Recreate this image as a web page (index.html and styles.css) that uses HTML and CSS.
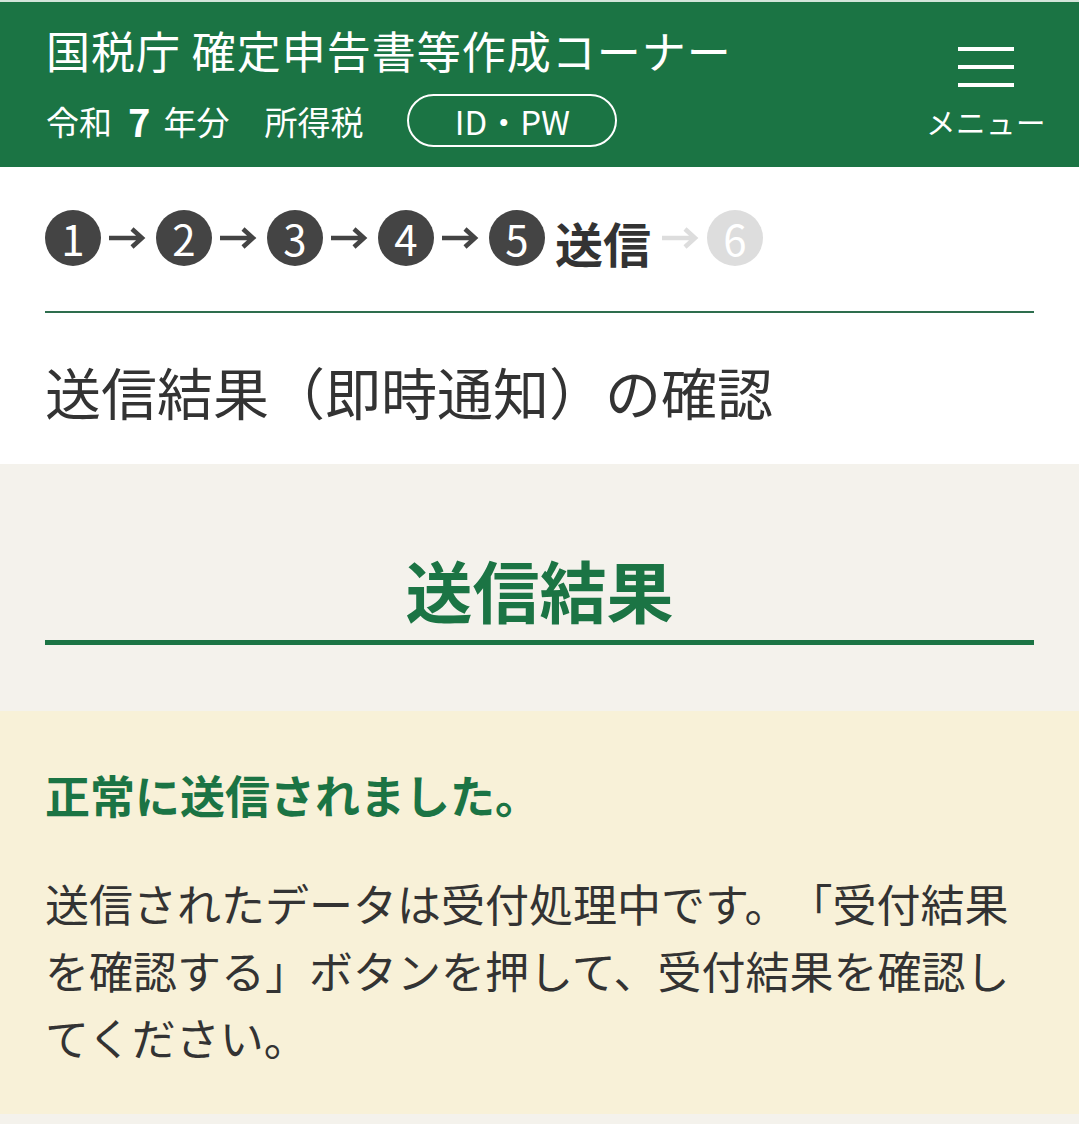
FILE: index.html
```html
<!DOCTYPE html>
<html lang="ja">
<head>
<meta charset="utf-8">
<title>送信結果（即時通知）の確認</title>
<link rel="stylesheet" href="styles.css">
</head>
<body>
<header class="header">
  <div class="header-main">
    <div class="site-title">国税庁 確定申告書等作成コーナー</div>
    <div class="header-sub">
      <span class="era">令和</span><b class="year-num">7</b><span class="era">年分</span>
      <span class="tax">所得税</span>
      <span class="pill">ID・PW</span>
    </div>
  </div>
  <div class="menu">
    <div class="burger"><span></span><span></span><span></span></div>
    <div class="menu-label">メニュー</div>
  </div>
</header>

<section class="top">
  <div class="steps">
    <span class="step">1</span>
    <svg class="arrow" viewBox="0 0 38 24"><path d="M1 12H34M24 3L34 12L24 21" fill="none" stroke="currentColor" stroke-width="4.5"/></svg>
    <span class="step">2</span>
    <svg class="arrow" viewBox="0 0 38 24"><path d="M1 12H34M24 3L34 12L24 21" fill="none" stroke="currentColor" stroke-width="4.5"/></svg>
    <span class="step">3</span>
    <svg class="arrow" viewBox="0 0 38 24"><path d="M1 12H34M24 3L34 12L24 21" fill="none" stroke="currentColor" stroke-width="4.5"/></svg>
    <span class="step">4</span>
    <svg class="arrow" viewBox="0 0 38 24"><path d="M1 12H34M24 3L34 12L24 21" fill="none" stroke="currentColor" stroke-width="4.5"/></svg>
    <span class="step">5</span>
    <span class="step-label">送信</span>
    <svg class="arrow arrow-off" viewBox="0 0 38 24"><path d="M1 12H34M24 3L34 12L24 21" fill="none" stroke="currentColor" stroke-width="4.5"/></svg>
    <span class="step step-off">6</span>
  </div>
  <h1 class="page-title">送信結果（即時通知）の確認</h1>
</section>

<section class="result-head">
  <h2 class="result-title">送信結果</h2>
</section>

<section class="notice">
  <p class="notice-title">正常に送信されました。</p>
  <p class="notice-text">送信されたデータは受付処理中です。「受付結果を確認する」ボタンを押して、受付結果を確認してください。</p>
</section>
<div class="tail"></div>
</body>
</html>
```

FILE: styles.css
```css
* {
  box-sizing: border-box;
}

html, body {
  margin: 0;
  padding: 0;
  background: #f4f2ec;
}

body {
  font-family: "Noto Sans CJK JP", "Noto Sans", sans-serif;
  color: #333333;
  text-spacing-trim: space-all;
}

.header {
  border-top: 2px solid #d3e5da;
  background: #1b7444;
  color: #ffffff;
  height: 167px;
  display: flex;
  justify-content: space-between;
  padding: 0 33px 0 46px;
}

.header-main {
  display: flex;
  flex-direction: column;
  padding-top: 22px;
}

.site-title {
  font-size: 44px;
  line-height: 53px;
  letter-spacing: 1px;
}

.header-sub {
  display: flex;
  align-items: center;
  margin-top: 17px;
  font-size: 33px;
  line-height: 40px;
}

.year-num {
  font-size: 38px;
  font-weight: 700;
  margin: 0 13px 0 16px;
}

.tax {
  margin-left: 35px;
}

.pill {
  margin-left: 44px;
  width: 210px;
  height: 53px;
  border: 2px solid #ffffff;
  border-radius: 27px;
  display: flex;
  align-items: center;
  justify-content: center;
  font-size: 33px;
}

.menu {
  display: flex;
  flex-direction: column;
  align-items: center;
  padding-top: 45px;
}

.burger {
  width: 56px;
  display: flex;
  flex-direction: column;
  gap: 14px;
}

.burger span {
  display: block;
  height: 4px;
  background: #ffffff;
}

.menu-label {
  margin-top: 16px;
  font-size: 29.5px;
  line-height: 36px;
  letter-spacing: 0.5px;
}

.top {
  background: #ffffff;
  padding: 43px 45px 41px;
}

.steps {
  display: flex;
  align-items: center;
  height: 56px;
  padding-bottom: 45px;
  box-sizing: content-box;
  border-bottom: 2px solid #2e6e4e;
}

.step {
  width: 56px;
  height: 56px;
  border-radius: 50%;
  background: #444444;
  color: #ffffff;
  font-size: 42px;
  line-height: 56px;
  text-align: center;
  flex: none;
}

.step-off {
  background: #dddddd;
}

.arrow {
  width: 38px;
  height: 24px;
  margin: 0 10px 0 7px;
  color: #444444;
  flex: none;
}

.arrow-off {
  color: #dddddd;
  margin-left: 10px;
  margin-right: 8px;
}

.step-label {
  margin-left: 10px;
  font-size: 48px;
  font-weight: 700;
  line-height: 56px;
  color: #333333;
  padding-top: 8px;
}

.page-title {
  margin: 45px 0 0;
  font-size: 56px;
  font-weight: 400;
  line-height: 65px;
  color: #333333;
}

.result-head {
  padding: 85px 45px 66px;
}

.result-title {
  margin: 0;
  text-align: center;
  font-size: 67px;
  line-height: 80px;
  font-weight: 700;
  color: #1b7444;
  padding-bottom: 11px;
  border-bottom: 5px solid #1b7444;
}

.notice {
  background: #f8f1d8;
  padding: 56px 45px 43px;
}

.notice-title {
  margin: 0;
  font-size: 45px;
  line-height: 56px;
  font-weight: 700;
  color: #1b7444;
}

.notice-text {
  margin: 47px 0 0;
  font-size: 44px;
  line-height: 67px;
  color: #333333;
}

.tail {
  height: 40px;
}
```
